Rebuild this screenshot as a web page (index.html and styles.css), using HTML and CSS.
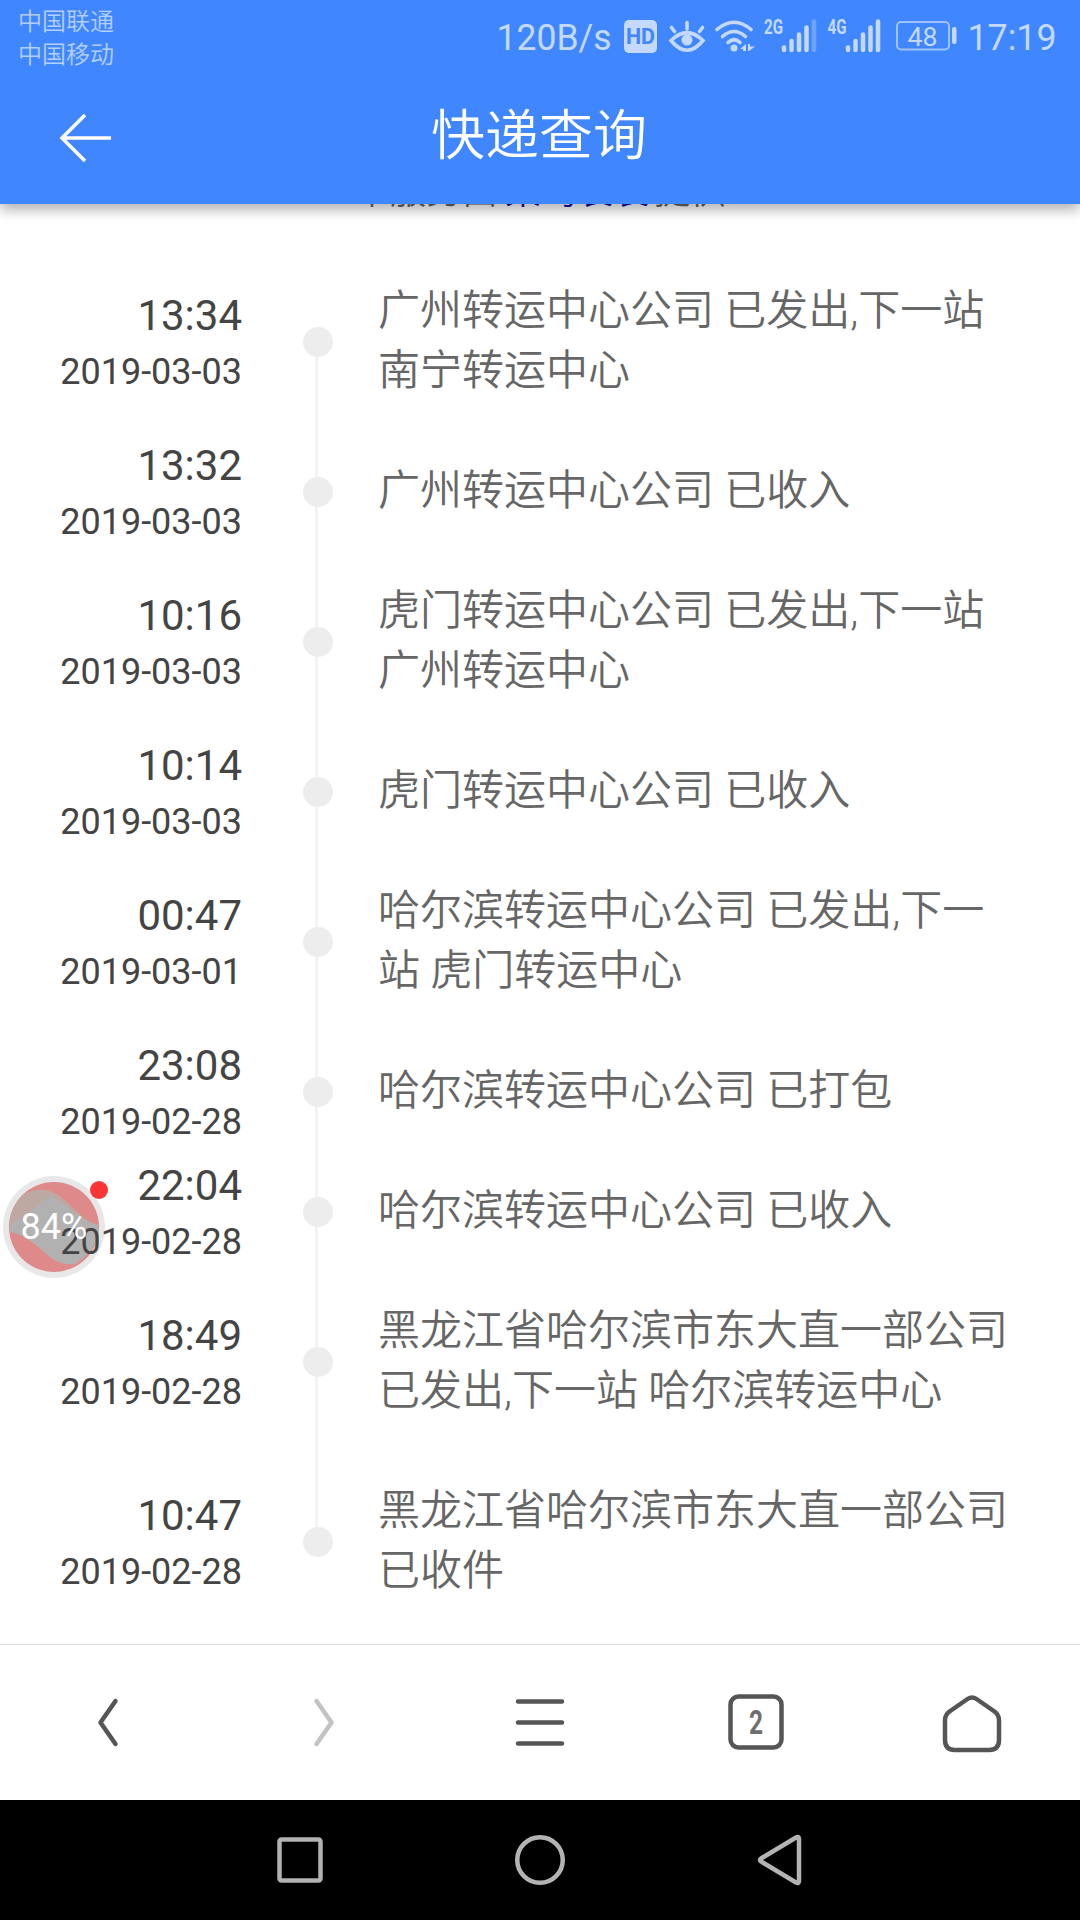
FILE: index.html
```html
<!DOCTYPE html>
<html lang="zh-CN">
<head>
    <meta charset="UTF-8">
    <meta name="viewport" content="width=device-width, initial-scale=1.0">
    <title>快递查询</title>
    <link rel="stylesheet" href="styles.css">
</head>
<body>
    <header class="header">
        <div class="status-bar">
            <div class="carriers">
                <div>中国联通</div>
                <div>中国移动</div>
            </div>
            <!-- network speed, HD, eye comfort, wifi, signals, battery, clock -->
            <svg class="status-icons" width="600" height="72" viewBox="480 0 600 72">
                <text x="496.500" y="50" font-size="36.500" textLength="115" lengthAdjust="spacingAndGlyphs">120B/s</text>
                <rect x="624" y="20" width="33" height="33" rx="5" />
                <text class="hd" x="626" y="44" font-size="21.500" textLength="29" lengthAdjust="spacingAndGlyphs">HD</text>
                <g class="line">
                    <path d="M671 40.500Q687 25 703 40.500Q687 60 671 40.500Z" />
                    <path d="M687 22.500V29M671.500 27.500L674.500 31.500M702.500 27.500L699.500 31.500" />
                </g>
                <circle cx="687" cy="40" r="5.500" />
                <g class="line">
                    <path d="M717 29.500Q734 15 751 29.500" />
                    <path d="M722.500 36.500Q734 26.500 745.500 36.500" />
                    <path d="M728 42.500Q734 37 740 42.500" />
                </g>
                <circle cx="734" cy="48" r="3.500" />
                <path d="M740 49L746 44V51H743V49ZM748 44H750V46.500H755L749 51H748Z" />
                <text class="net" x="764" y="33.500" font-size="19.500" textLength="19" lengthAdjust="spacingAndGlyphs">2G</text>
                <g class="bars">
                    <path d="M784 47.500V50M791.500 41V50M799 34.500V50M806.500 27.500V50" />
                    <path class="dim" d="M814 21.500V50" />
                </g>
                <text class="net" x="827.500" y="33.500" font-size="19.500" textLength="19" lengthAdjust="spacingAndGlyphs">4G</text>
                <g class="bars">
                    <path d="M848 47.500V50M855.500 41V50M863 34.500V50M870.500 27.500V50M878 21.500V50" />
                </g>
                <rect class="battery" x="897" y="22" width="52" height="27.500" rx="4" />
                <rect x="952" y="27" width="4.500" height="17" rx="2" />
                <text x="907.500" y="45.500" font-size="26" textLength="30" lengthAdjust="spacingAndGlyphs">48</text>
                <text x="967.500" y="50" font-size="36.500" textLength="89" lengthAdjust="spacingAndGlyphs">17:19</text>
            </svg>
        </div>
        <div class="title-bar">
            <svg class="back" width="56" height="56" viewBox="0 0 56 56">
                <path d="M53 28H4M27 5L4 28L27 51" />
            </svg>
            <h1>快递查询</h1>
        </div>
    </header>

    <main class="content">
        <p class="provider">本服务由<a>菜鸟裹裹</a>提供</p>
        <ul class="timeline">
            <li class="step">
                <div class="when"><span class="time">13:34</span><span class="date">2019-03-03</span></div>
                <div class="track"><i class="dot"></i></div>
                <p class="info">广州转运中心公司 已发出,下一站 南宁转运中心</p>
            </li>
            <li class="step short">
                <div class="when"><span class="time">13:32</span><span class="date">2019-03-03</span></div>
                <div class="track"><i class="dot"></i></div>
                <p class="info">广州转运中心公司 已收入</p>
            </li>
            <li class="step">
                <div class="when"><span class="time">10:16</span><span class="date">2019-03-03</span></div>
                <div class="track"><i class="dot"></i></div>
                <p class="info">虎门转运中心公司 已发出,下一站 广州转运中心</p>
            </li>
            <li class="step short">
                <div class="when"><span class="time">10:14</span><span class="date">2019-03-03</span></div>
                <div class="track"><i class="dot"></i></div>
                <p class="info">虎门转运中心公司 已收入</p>
            </li>
            <li class="step">
                <div class="when"><span class="time">00:47</span><span class="date">2019-03-01</span></div>
                <div class="track"><i class="dot"></i></div>
                <p class="info">哈尔滨转运中心公司 已发出,下一站 虎门转运中心</p>
            </li>
            <li class="step short">
                <div class="when"><span class="time">23:08</span><span class="date">2019-02-28</span></div>
                <div class="track"><i class="dot"></i></div>
                <p class="info">哈尔滨转运中心公司 已打包</p>
            </li>
            <li class="step short">
                <div class="when"><span class="time">22:04</span><span class="date">2019-02-28</span></div>
                <div class="track"><i class="dot"></i></div>
                <p class="info">哈尔滨转运中心公司 已收入</p>
            </li>
            <li class="step">
                <div class="when"><span class="time">18:49</span><span class="date">2019-02-28</span></div>
                <div class="track"><i class="dot"></i></div>
                <p class="info">黑龙江省哈尔滨市东大直一部公司 已发出,下一站 哈尔滨转运中心</p>
            </li>
            <li class="step">
                <div class="when"><span class="time">10:47</span><span class="date">2019-02-28</span></div>
                <div class="track"><i class="dot"></i></div>
                <p class="info">黑龙江省哈尔滨市东大直一部公司 已收件</p>
            </li>
        </ul>
    </main>

    <!-- Floating memory ball -->
    <div class="ball">
        <svg width="106" height="106" viewBox="0 0 106 106">
            <circle class="ring" cx="53" cy="53" r="51" />
            <circle class="red" cx="53" cy="53" r="45" />
            <path class="wave-back" d="M9 58Q7 36 22 21Q38 11 56 20C70 30 80 46 97 51Q99 62 94 71Q87 82 75 90Q60 92 48 82C34 70 24 60 9 58Z" />
            <path class="wave" d="M9 50Q20 47 30 37Q40 27 49 22Q62 27 70 36Q82 47 97 51Q98 62 93 71Q86 81 72 90Q60 92 48 82C34 70 24 60 9 58Z" />
        </svg>
        <span class="percent">84%</span>
        <span class="badge"></span>
    </div>

    <nav class="toolbar">
        <svg width="60" height="60" viewBox="0 0 60 60"><path d="M37.500 8L22.500 29.500L37.500 51" /></svg>
        <svg class="disabled" width="60" height="60" viewBox="0 0 60 60"><path d="M22.500 8L37.500 29.500L22.500 51" /></svg>
        <svg width="60" height="60" viewBox="0 0 60 60"><path d="M8 8.500H52M8 29.500H52M8 50.500H52" /></svg>
        <svg width="60" height="60" viewBox="0 0 60 60">
            <rect x="4.500" y="3.500" width="51" height="51" rx="8" />
            <text x="23" y="40.500" font-size="33" textLength="14" lengthAdjust="spacingAndGlyphs">2</text>
        </svg>
        <svg width="60" height="60" viewBox="0 0 60 60"><path d="M25.500 6Q30 3 34.500 6L52.500 18.500Q57 22 57 27V47Q57 57 47 57H13Q3 57 3 47V27Q3 22 7.500 18.500Z" /></svg>
    </nav>

    <footer class="nav-bar">
        <svg width="60" height="60" viewBox="0 0 60 60"><rect x="9.500" y="9.500" width="41" height="41" rx="2" /></svg>
        <svg width="60" height="60" viewBox="0 0 60 60"><circle cx="30" cy="30" r="22.750" /></svg>
        <svg width="60" height="60" viewBox="0 0 60 60"><path d="M11 28.500L46 7.500Q49 6 49 9V51Q49 54 46 52.500L11 31.500Q9 30 11 28.500Z" /></svg>
    </footer>
</body>
</html>
```
FILE: styles.css
```css
* {
    box-sizing: border-box;
}
body {
    margin: 0;
    height: 1920px;
    display: flex;
    flex-direction: column;
    position: relative;
    background: #fff;
    font-family: Roboto, "Noto Sans CJK SC", sans-serif;
    overflow: hidden;
}
svg {
    display: block;
    flex: none;
}

/* Header */
.header {
    height: 204px;
    flex: none;
    background: #4087ff;
    color: #fff;
    box-shadow: 0 6px 12px rgba(0, 0, 0, 0.3);
    position: relative;
    z-index: 3;
}
.status-bar {
    height: 72px;
    display: flex;
    justify-content: space-between;
}
.carriers {
    padding: 6px 0 0 18px;
    font-size: 24px;
    line-height: 33px;
    font-weight: 350;
    color: #b3cfff;
}
.status-icons {
    fill: #c5d9ff;
}
.status-icons .hd {
    fill: #4087ff;
    font-weight: 700;
}
.status-icons .net {
    font-weight: 700;
}
.status-icons .line {
    fill: none;
    stroke: #c5d9ff;
    stroke-width: 3.6;
    stroke-linecap: round;
}
.status-icons .bars {
    stroke: #c5d9ff;
    stroke-width: 4.5;
    stroke-linecap: round;
}
.status-icons .dim {
    opacity: 0.35;
}
.status-icons .battery {
    fill: none;
    stroke: #a0c3ff;
    stroke-width: 2;
}
.title-bar {
    height: 132px;
    display: grid;
    grid-template-columns: 1fr auto 1fr;
    align-items: center;
}
.title-bar h1 {
    margin: 0 0 0 -2px;
    font-size: 54px;
    line-height: 60px;
    font-weight: 350;
    padding-bottom: 3px;
}
.back {
    margin-left: 58px;
    fill: none;
    stroke: #fff;
    stroke-width: 3.5;
}

/* Timeline */
.content {
    flex: 1;
    min-height: 0;
    position: relative;
    z-index: 1;
}
.provider {
    margin: -32px 0 0;
    height: 78px;
    text-align: center;
    font-size: 36px;
    line-height: 40px;
    font-weight: 350;
    color: #666;
}
.provider a {
    margin: 0 5px 0 7px;
    color: #1a0dab;
}
.timeline {
    list-style: none;
    margin: 0;
    padding: 0;
}
.step {
    height: 180px;
    display: flex;
    align-items: center;
}
.step.short {
    height: 120px;
}
.when {
    width: 242px;
    display: flex;
    flex-direction: column;
    text-align: right;
    color: #444;
    padding-top: 6px;
}
.time {
    font-size: 42px;
    line-height: 58px;
}
.date {
    font-size: 36px;
    line-height: 54px;
}
.track {
    width: 136px;
    align-self: stretch;
    display: flex;
    align-items: center;
    padding: 4px 0 0 61px;
    background: linear-gradient(#f3f3f3, #f3f3f3) 73px 0 / 3px 100% no-repeat;
}
.step:first-child .track {
    background-position: 73px 92px;
}
.step:last-child .track {
    background-size: 3px 92px;
}
.dot {
    width: 30px;
    height: 30px;
    border-radius: 50%;
    background: #ededed;
}
.info {
    width: 640px;
    margin: 0;
    padding-top: 2px;
    font-size: 42px;
    line-height: 60px;
    font-weight: 350;
    color: #666;
}

/* Floating ball: the disc sits under the dates, its label over them */
.ball {
    position: absolute;
    left: 1px;
    top: 1174px;
    width: 106px;
    height: 106px;
}
.ball .ring {
    fill: #e8e8e8;
}
.ball .red {
    fill: #de8a8a;
}
.ball .wave-back {
    fill: #bda8a2;
}
.ball .wave {
    fill: #b1b1b1;
}
.percent {
    position: absolute;
    left: 0;
    top: 32px;
    width: 106px;
    text-align: center;
    font-size: 36px;
    line-height: 42px;
    color: #fff;
    z-index: 2;
}
.badge {
    position: absolute;
    left: 89px;
    top: 7px;
    width: 18px;
    height: 18px;
    border-radius: 50%;
    background: #f93535;
    z-index: 2;
}

/* Browser toolbar */
.toolbar {
    height: 156px;
    flex: none;
    border-top: 1px solid #dcdcdc;
    background: #fff;
    display: grid;
    grid-template-columns: repeat(5, 1fr);
    align-items: center;
    justify-items: center;
}
.toolbar svg {
    fill: none;
    stroke: #555;
    stroke-width: 4.5;
    stroke-linecap: round;
    stroke-linejoin: round;
}
.toolbar .disabled {
    stroke: #c3c3c3;
}
.toolbar text {
    fill: #6f6f6f;
    stroke: none;
    font-weight: 700;
}

/* System navigation */
.nav-bar {
    height: 120px;
    flex: none;
    background: #000;
    display: flex;
    align-items: center;
    justify-content: center;
    gap: 180px;
}
.nav-bar svg {
    fill: none;
    stroke: #b3b3b3;
    stroke-width: 4.5;
}
```
